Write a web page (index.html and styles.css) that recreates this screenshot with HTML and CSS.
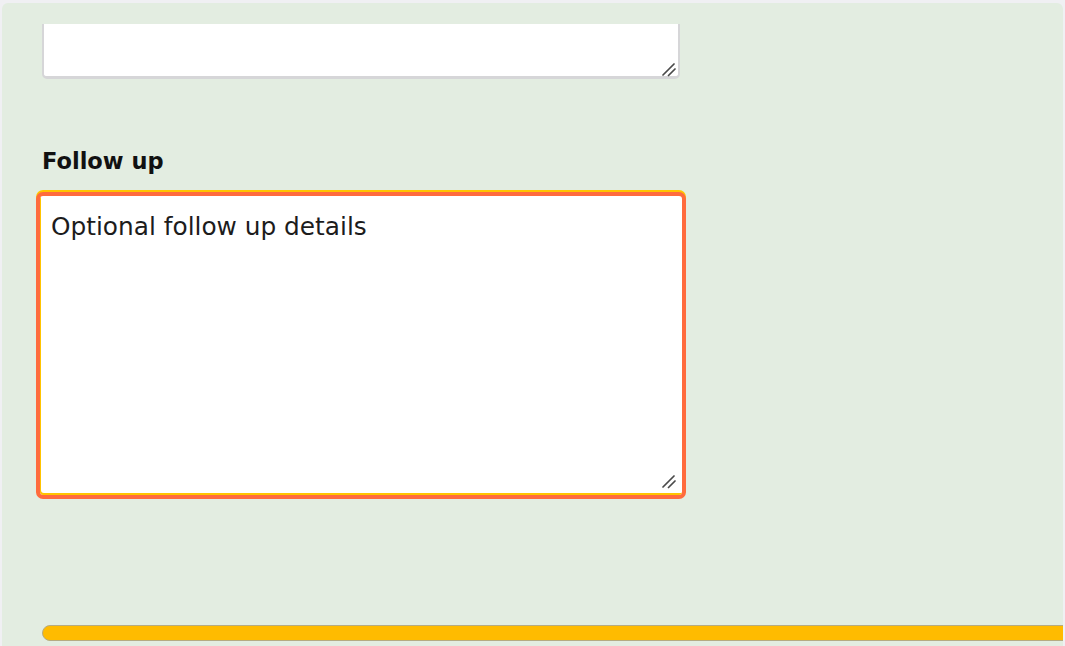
FILE: index.html
```html
<!DOCTYPE html>
<html lang="en">
<head>
<meta charset="utf-8">
<title>Follow up</title>
<link rel="stylesheet" href="styles.css">
</head>
<body>
<div class="panel">
  <div class="clip">
    <textarea class="ta ta-plain" aria-label="Notes"></textarea>
    <svg class="grip grip-plain" width="14" height="15" viewBox="0 0 14 15" aria-hidden="true">
      <path d="M1 13 L12 2 M6.5 13.5 L13 7" stroke="#4a4a4a" stroke-width="1.7" stroke-linecap="round" fill="none"/>
    </svg>
  </div>
  <label class="label" for="followup">Follow up</label>
  <div class="field">
    <textarea id="followup" class="ta ta-focus">Optional follow up details</textarea>
    <svg class="grip grip-focus" width="14" height="15" viewBox="0 0 14 15" aria-hidden="true">
      <path d="M1 13 L12 2 M6.5 13.5 L13 7" stroke="#4a4a4a" stroke-width="1.7" stroke-linecap="round" fill="none"/>
    </svg>
  </div>
  <div class="bar"></div>
</div>
</body>
</html>
```
FILE: styles.css
```css
html, body {
  margin: 0;
  padding: 0;
  background: #f0f0f3;
  overflow: hidden;
}
body {
  width: 1065px;
  height: 646px;
  font-family: "DejaVu Sans", "Open Sans", sans-serif;
}
.panel {
  margin: 3px 2px 0 2px;
  height: 643px;
  background: #e3ede1;
  border-top-left-radius: 6px;
  border-top-right-radius: 6px;
  padding: 21px 0 0 40px;
  box-sizing: border-box;
  display: flex;
  flex-direction: column;
  align-items: flex-start;
  overflow: hidden;
}
.clip {
  position: relative;
  height: 55px;
  width: 638px;
  overflow: hidden;
  display: flex;
  align-items: flex-end;
}
.ta {
  font-family: "DejaVu Sans", "Open Sans", sans-serif;
  color: #1c1c1c;
  box-sizing: border-box;
  outline: none;
  background: #fff;
  resize: none;
  display: block;
}
.ta-plain {
  width: 638px;
  height: 120px;
  flex: none;
  border: 2px solid #d6d6d8;
  border-bottom-width: 3px;
  border-radius: 5px;
}
.grip {
  position: absolute;
  display: block;
}
.grip-plain {
  right: 4px;
  bottom: 2px;
}
.label {
  margin-top: 69px;
  font-size: 22.5px;
  font-weight: 700;
  line-height: 26px;
  color: #111;
}
.field {
  position: relative;
  margin-top: 18px;
  margin-left: -6px;
}
.ta-focus {
  width: 650px;
  height: 307px;
  border: 4px solid #ff6b3d;
  border-radius: 7px;
  box-shadow: 0 -2px 0 0 #ffc400, inset 1px -2px 0 0 #ffc400;
  padding: 16px 11px;
  font-size: 24.8px;
  line-height: 30px;
}
.grip-focus {
  right: 10px;
  bottom: 10px;
}
.bar {
  margin-top: 126px;
  width: 1040px;
  height: 16px;
  box-sizing: border-box;
  background: #ffbb00;
  border: 1px solid #b5ab82;
  border-radius: 8px;
}
```
